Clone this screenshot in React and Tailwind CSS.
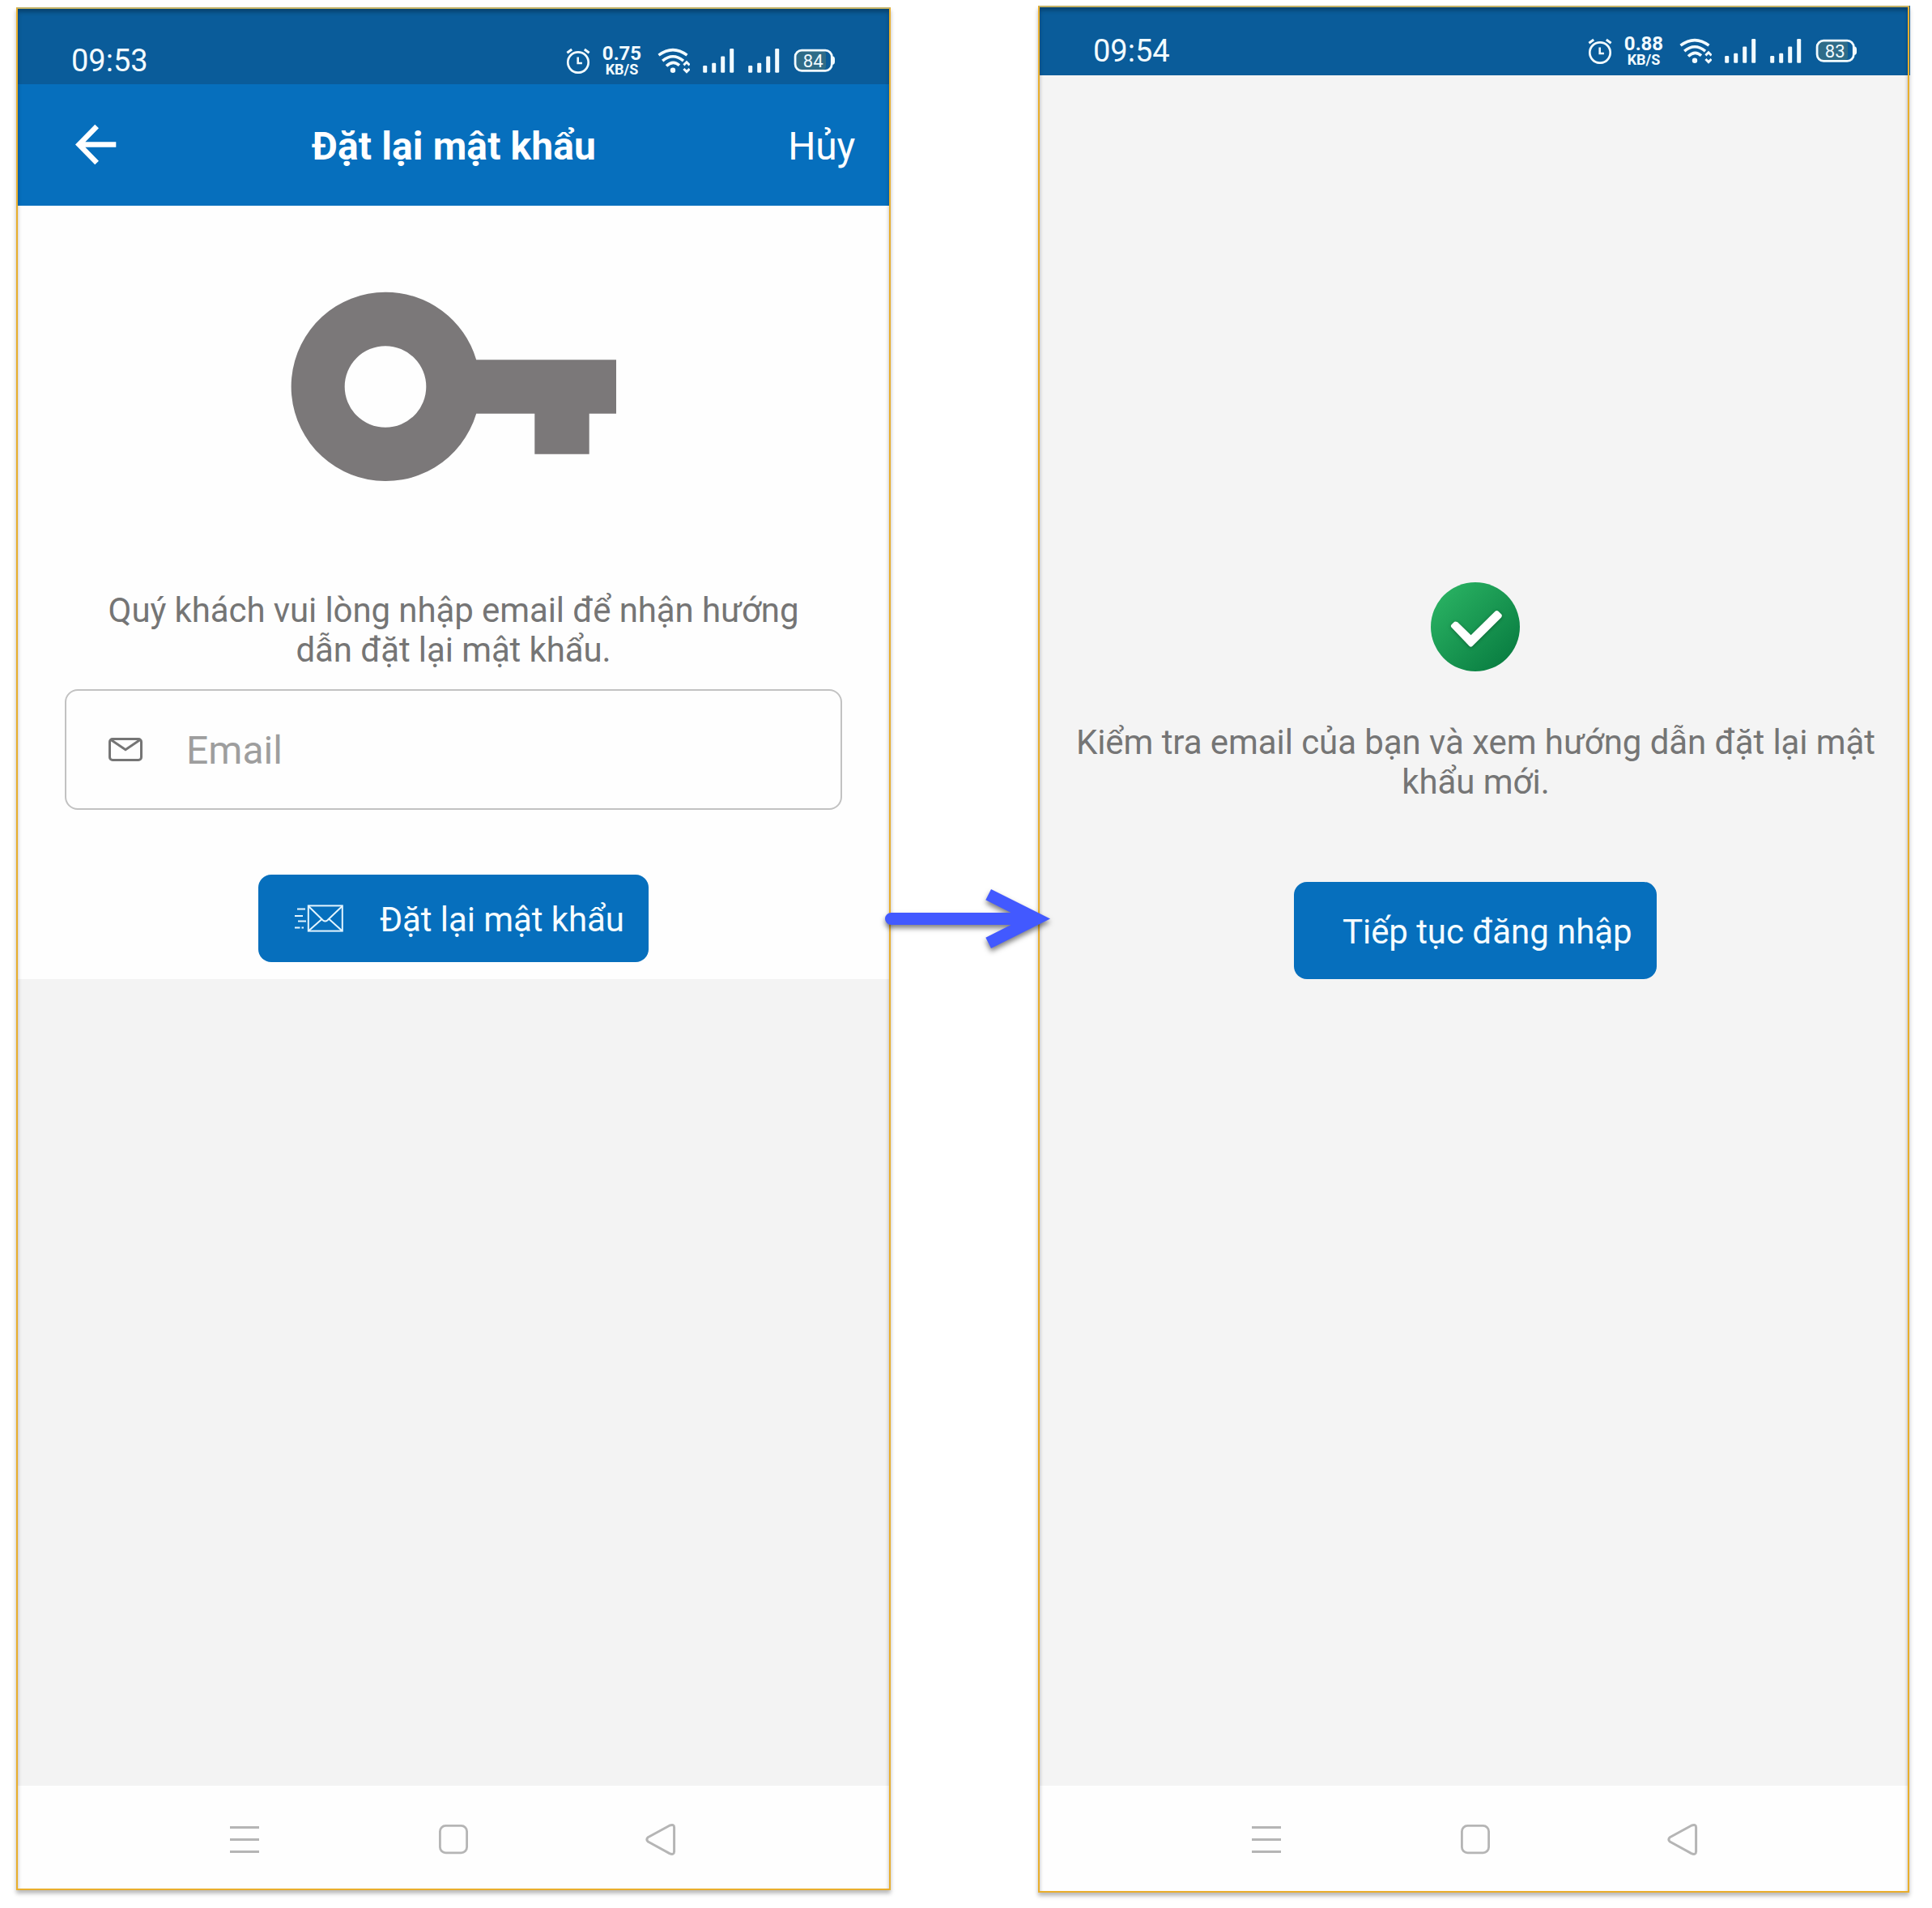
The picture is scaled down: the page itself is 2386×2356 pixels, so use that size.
import React from "react";

function AlarmIcon() {
  return (
    <svg width="30" height="32" viewBox="0 0 30 32" fill="none" stroke="#f2fbff" strokeWidth="2.7">
      <circle cx="15" cy="18" r="12.7" />
      <path d="M14.7 11.5V19H19.9" strokeWidth="2.6" />
      <path d="M1.4 6.2L7.2 2M22.8 2L28.6 6.2" strokeWidth="3" />
    </svg>
  );
}

function WifiIcon() {
  return (
    <svg className="ml-[19px]" width="40" height="32" viewBox="0 0 40 32" fill="none" stroke="#f2fbff" strokeWidth="3.5">
      <path d="M1.5 9.2Q19 -4 36.5 9.2" />
      <path d="M6.2 16.2Q19 5.2 32 16.2" />
      <path d="M11 22.6Q19 14.6 27 21.6" />
      <circle cx="19" cy="27.7" r="3.2" fill="#f2fbff" stroke="none" />
      <path d="M32.4 21.4L36 17.8L39.6 21.4M32.4 26L36 29.6L39.6 26" strokeWidth="3" />
    </svg>
  );
}

function SignalIcon({ className }) {
  return (
    <svg className={className} width="39" height="32" viewBox="0 0 39 32" fill="#f2fbff">
      <rect x="0.2" y="22" width="5" height="8.8" rx="1.2" />
      <rect x="11.2" y="18.8" width="5" height="12" rx="1.2" />
      <rect x="22.2" y="10.6" width="5" height="20.2" rx="1.2" />
      <rect x="33.2" y="1" width="5" height="29.8" rx="1.2" />
    </svg>
  );
}

function BatteryIcon({ level }) {
  return (
    <svg className="ml-[17px]" width="52" height="32" viewBox="0 0 52 32">
      <rect x="4" y="4" width="36" height="23" rx="4" fill="#2f6c88" />
      <rect x="2.1" y="3.1" width="45.2" height="25.2" rx="8" fill="none" stroke="#f2fbff" strokeWidth="2.8" />
      <path d="M48 10.4h1.2q1.8 1 1.8 3v4.4q0 2-1.8 3H48z" fill="#f2fbff" />
      <text x="11.8" y="23.7" fill="#f2fbff" className="font-['Roboto'] text-[22px]">{level}</text>
    </svg>
  );
}

function StatusBar({ time, speed, level, className }) {
  return (
    <div className={`flex shrink-0 items-end bg-[#0a5c9a] text-[#f2fbff] ${className}`}>
      <div className="flex h-8 items-start">
        <div className="w-[611px] text-[38px] leading-8">{time}</div>
        <AlarmIcon />
        <div className="ml-[14px] flex w-[50px] flex-col items-center font-bold">
          <span className="text-[24px] leading-[15px]">{speed}</span>
          <span className="text-[18px] leading-[23px]">KB/S</span>
        </div>
        <WifiIcon />
        <SignalIcon className="ml-4" />
        <SignalIcon className="ml-[17px]" />
        <BatteryIcon level={level} />
      </div>
    </div>
  );
}

function NavBar() {
  return (
    <div className="flex flex-1 items-start bg-[#fefefe] pt-[46px] pl-[262px]">
      <svg width="36" height="41" viewBox="0 0 36 41" stroke="#b5b5b5" strokeWidth="3">
        <path d="M0 5.5H36M0 20.5H36M0 35.5H36" />
      </svg>
      <svg className="ml-[222px]" width="36" height="41" viewBox="0 0 36 41" fill="none" stroke="#b5b5b5" strokeWidth="2.8">
        <rect x="1.4" y="3.4" width="33.2" height="33.4" rx="7" />
      </svg>
      <svg className="ml-[219px]" width="38" height="41" viewBox="0 0 38 41" fill="none" stroke="#b5b5b5" strokeWidth="3" strokeLinejoin="round">
        <path d="M3.2 17.8Q.6 20.4 3.2 23L29.8 37.6Q35.6 40.2 35.6 35V5.6Q35.6 .8 29.8 3.2Z" />
      </svg>
    </div>
  );
}

function Phone({ className, children }) {
  return (
    <div className={`relative flex shrink-0 flex-col border-2 border-[#e9ae2c] border-t-[#c3b266] shadow-[0_4px_5px_rgba(0,0,0,0.28)] ${className}`}>
      {children}
      <div className="pointer-events-none absolute inset-0 shadow-[inset_0_4px_5px_rgba(0,0,0,0.28)]" />
    </div>
  );
}

function KeyIcon() {
  return (
    <svg width="402" height="235" viewBox="0 0 402 235" fill="#7b7879">
      <path
        fillRule="evenodd"
        d="M116.8 .7A116.7 116.7 0 1 0 229.2 150.7H301.3V200.7H368.7V150.7H402V84.3H229.2A116.7 116.7 0 0 0 116.8 .7ZM117 67.2A50.3 50.3 0 1 1 117 167.8A50.3 50.3 0 1 1 117 67.2Z"
      />
    </svg>
  );
}

function SendMailIcon() {
  return (
    <svg width="60" height="34" viewBox="0 0 60 34" fill="none" stroke="#e3f5ff" strokeWidth="2">
      <rect x="16.8" y="1.4" width="42" height="31.2" />
      <path d="M17 2L35 19.4Q37.6 21.6 40.2 19.4L58.6 2M17 32.4L34 17.6M58.6 32.4L42 17.6" />
      <path d="M3 5.4H13M0 14H10M4 20.4H14M0 28.6H6.5M8.5 28.6H11" />
    </svg>
  );
}

function ResetScreen() {
  return (
    <Phone className="mt-[9px] h-[2325px] w-[1080px]">
      <StatusBar time="09:53" speed="0.75" level="84" className="h-[93px] pb-[13px] pl-[66px]" />
      <header className="grid h-[150px] shrink-0 grid-cols-3 items-center bg-[#066fbd] pr-[42px] pb-px pl-[71px] text-[48px] leading-[56px] text-white">
        <svg width="51" height="51" viewBox="0 0 51 51" fill="none" stroke="#fff" strokeWidth="6.6">
          <path d="M50.3 25.5H5M26.6 3L4.6 25.5L26.6 48" />
        </svg>
        <h1 className="-ml-7 justify-self-center pt-1 font-bold tracking-[0.12px] whitespace-nowrap">Đặt lại mật khẩu</h1>
        <button className="justify-self-end pt-1 tracking-[-0.2px]">Hủy</button>
      </header>
      <main className="flex h-[955px] shrink-0 flex-col items-center bg-[#fefefe] pt-[106px]">
        <KeyIcon />
        <p className="mt-[134px] text-center text-[42px] leading-[49px] tracking-[-0.1px] whitespace-nowrap text-[#757575]">
          Quý khách vui lòng nhập email để nhận hướng
          <br />
          dẫn đặt lại mật khẩu.
        </p>
        <label className="mt-6 flex h-[149px] w-[960px] items-center rounded-2xl border-2 border-[#c2c2c2] pl-[52px]">
          <svg width="42" height="29" viewBox="0 0 42 29" fill="none" stroke="#757575" strokeWidth="3">
            <rect x="1.5" y="1.5" width="39" height="26" rx="3.5" />
            <path d="M3 2.5L21 14.8L39 2.5" />
          </svg>
          <span className="ml-[54px] pt-[2px] text-[48px] text-[#9e9e9e]">Email</span>
        </label>
        <button className="mt-20 flex h-[108px] w-[482px] items-center rounded-2xl bg-[#066fbd] pl-[45px] text-[42px] tracking-[-0.08px] whitespace-nowrap text-[#f5fcff]">
          <SendMailIcon />
          <span className="ml-[45px] pt-[3px]">Đặt lại mật khẩu</span>
        </button>
      </main>
      <div className="h-[996px] shrink-0 bg-[#f3f3f3]" />
      <NavBar />
    </Phone>
  );
}

function SuccessIcon() {
  return (
    <svg width="110" height="110" viewBox="0 0 110 110">
      <defs>
        <linearGradient id="badge" x1="0.15" y1="0.15" x2="0.85" y2="0.85">
          <stop offset="0" stopColor="#27ae60" />
          <stop offset="1" stopColor="#0b8043" />
        </linearGradient>
      </defs>
      <circle cx="55" cy="55" r="55" fill="url(#badge)" />
      <path
        className="drop-shadow-[0_1px_2px_rgba(0,0,0,0.3)]"
        d="M31.3 48.7Q29.8 48 28.4 49.4L25.4 52.6Q24.3 54 25.4 55.4L47.8 79Q49.5 80.6 51.2 79L87 43.4Q88.6 41.4 87.2 39.6L83.4 35.7Q81.5 34.2 79.6 35.7L49.6 65.2L33.4 49.4Q32.4 48.4 31.3 48.7Z"
        fill="#fff"
      />
    </svg>
  );
}

function SuccessScreen() {
  return (
    <Phone className="mt-[7px] ml-[182px] h-[2330px] w-[1076px]">
      <StatusBar time="09:54" speed="0.88" level="83" className="h-[84px] pb-[14px] pl-[66px]" />
      <main className="flex h-[2112px] shrink-0 flex-col items-center bg-[#f4f4f4] pt-[626px] pl-1">
        <SuccessIcon />
        <p className="mt-[63px] pl-px text-center text-[42px] leading-[49px] tracking-[-0.07px] whitespace-nowrap text-[#757575]">
          Kiểm tra email của bạn và xem hướng dẫn đặt lại mật
          <br />
          khẩu mới.
        </p>
        <button className="mt-[99px] flex h-[120px] w-[448px] items-center rounded-2xl bg-[#066fbd] pt-[3px] pl-[60px] text-[42px] tracking-[-0.07px] whitespace-nowrap text-[#f5fcff]">
          Tiếp tục đăng nhập
        </button>
      </main>
      <NavBar />
      <div className="absolute -top-0.5 -right-[3px] h-[86px] w-px bg-[#0a5c9a]" />
    </Phone>
  );
}

function FlowArrow() {
  return (
    <svg className="absolute top-[1090px] left-[1085px] drop-shadow-[0_4px_3px_rgba(0,0,0,0.5)]" width="220" height="90" viewBox="0 0 220 90" fill="#4259ff">
      <path d="M15.5 37H163.5L132.3 21.3L139 8L212 44.5L139 81L132.3 67.7L163.5 52H15.5A7.5 7.5 0 0 1 15.5 37Z" />
    </svg>
  );
}

export default function App() {
  return (
    <div className="relative flex h-[2356px] w-[2386px] items-start overflow-hidden bg-white pl-5 font-['Roboto',sans-serif]">
      <ResetScreen />
      <SuccessScreen />
      <FlowArrow />
    </div>
  );
}
